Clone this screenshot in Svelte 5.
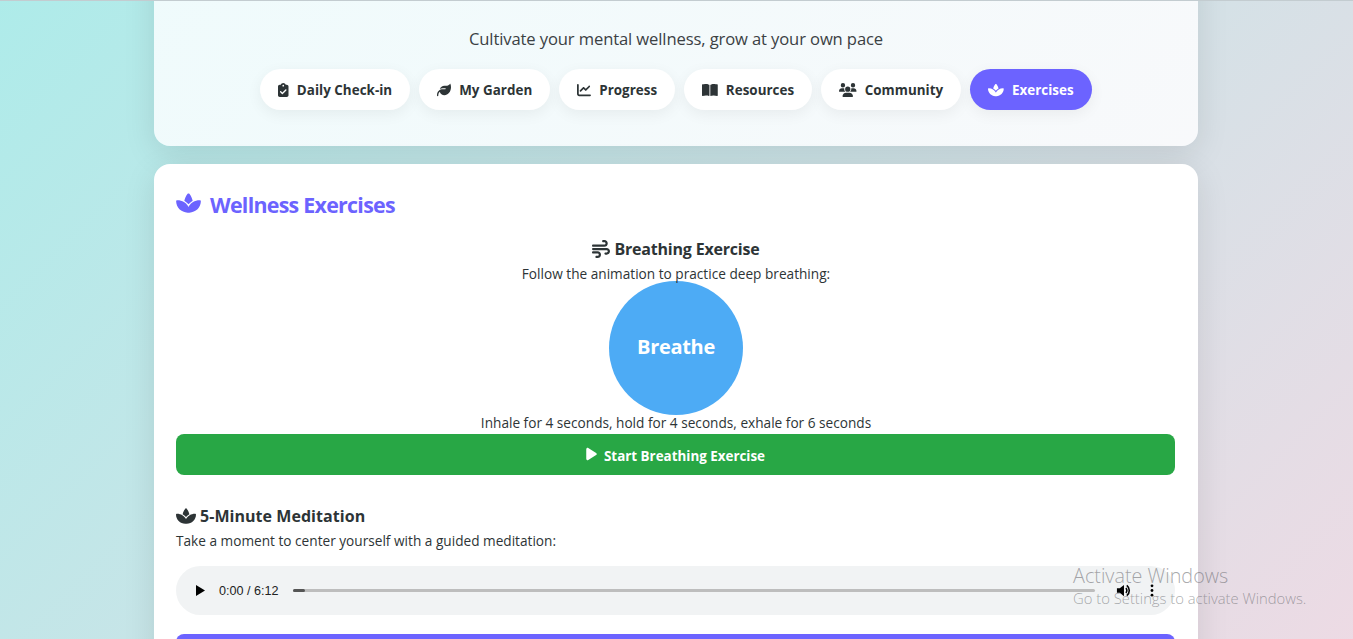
<script>
  const P = {
    check: ['0 0 384 512','M192 0c-41.8 0-77.4 26.7-90.5 64H64C28.7 64 0 92.7 0 128V448c0 35.3 28.7 64 64 64H320c35.3 0 64-28.7 64-64V128c0-35.3-28.7-64-64-64H282.5C269.4 26.7 233.8 0 192 0zm0 64a32 32 0 1 1 0 64 32 32 0 1 1 0-64zM305 273L177 401c-9.4 9.4-24.6 9.4-33.9 0L79 337c-9.4-9.4-9.4-24.6 0-33.9s24.6-9.4 33.9 0l47 47L271 239c9.4-9.4 24.6-9.4 33.9 0s9.4 24.6 0 33.9z'],
    leaf: ['0 0 512 512','M272 96c-78.6 0-145.1 51.5-167.7 122.5c33.6-17 71.5-26.5 111.7-26.5h88c8.8 0 16 7.2 16 16s-7.2 16-16 16H288 216s0 0 0 0c-16.6 0-32.7 1.9-48.2 5.4c-25.9 5.9-50 16.4-71.4 30.7c0 0 0 0 0 0C38.3 298.8 0 364.9 0 440v16c0 13.3 10.7 24 24 24s24-10.7 24-24V440c0-48.7 20.7-92.5 53.8-123.2C121.6 392.3 190.3 448 272 448l1 0c132.1-.7 239-130.9 239-291.4c0-42.6-7.5-83.1-21.1-119.6c-2.6-6.9-12.7-6.6-16.2 0C455.5 66.7 413.5 96 368 96h-96z'],
    chart: ['0 0 512 512','M64 64c0-17.7-14.3-32-32-32S0 46.3 0 64V400c0 44.2 35.8 80 80 80H480c17.7 0 32-14.3 32-32s-14.3-32-32-32H80c-8.8 0-16-7.2-16-16V64zm406.6 86.6c12.5-12.5 12.5-32.8 0-45.3s-32.8-12.5-45.3 0L320 210.7l-57.4-57.4c-12.5-12.5-32.8-12.5-45.3 0l-112 112c-12.5 12.5-12.5 32.8 0 45.3s32.8 12.5 45.3 0L240 221.3l57.4 57.4c12.5 12.5 32.8 12.5 45.3 0l128-128z'],
    book: ['0 0 576 512','M249.6 471.5c10.8 3.8 22.4-4.1 22.4-15.5V78.6c0-4.2-1.6-8.4-5-11C247.4 52 202.4 32 144 32C93.5 32 46.3 41.3 18.1 49.4C7.3 52.5 0 62.7 0 73.9V454.1c0 11.5 10.6 20 21.9 17.7C57 464.5 106.6 456 144 456c43.1 0 85.2 10.7 105.6 15.5zm76.8 0C346.8 466.7 388.9 456 432 456c37.4 0 87 8.5 122.1 15.8c11.3 2.3 21.9-6.2 21.9-17.7V73.9c0-11.3-7.3-21.4-18.1-24.5C529.7 41.3 482.5 32 432 32c-58.4 0-103.4 20-123 35.6c-3.4 2.6-5 6.8-5 11V456c0 11.4 11.7 19.3 22.4 15.5z'],
    users: ['0 0 640 512','M144 0a80 80 0 1 1 0 160A80 80 0 1 1 144 0zM512 0a80 80 0 1 1 0 160A80 80 0 1 1 512 0zM0 298.7C0 239.8 47.8 192 106.7 192h42.7c15.9 0 31 3.5 44.6 9.7c-1.3 7.2-1.9 14.7-1.9 22.3c0 38.2 16.8 72.5 43.3 96c-.2 0-.4 0-.7 0H21.3C9.6 320 0 310.4 0 298.7zM405.3 320c-.2 0-.4 0-.7 0c26.6-23.5 43.3-57.8 43.3-96c0-7.6-.7-15-1.9-22.3c13.6-6.3 28.7-9.7 44.6-9.7h42.7C592.2 192 640 239.8 640 298.7c0 11.8-9.6 21.3-21.3 21.3H405.3zM224 224a96 96 0 1 1 192 0 96 96 0 1 1 -192 0zM128 485.3C128 411.7 187.7 352 261.3 352H378.7C452.3 352 512 411.7 512 485.3c0 14.7-11.9 26.7-26.7 26.7H154.7c-14.7 0-26.7-11.9-26.7-26.7z'],
    spa: ['0 0 576 512','M183.1 235.3c33.7 20.7 62.9 48.1 85.8 80.5c7 9.9 13.4 20.3 19.1 31c5.7-10.8 12.1-21.1 19.1-31c22.9-32.4 52.1-59.8 85.8-80.5C437.6 207.8 490.1 192 546 192h9.9c11.1 0 20.1 9 20.1 20.1C576 360.1 456.1 480 308.1 480H288 267.9C119.9 480 0 360.1 0 212.1C0 201 9 192 20.1 192H30c55.9 0 108.4 15.8 153.1 43.3zM301.5 37.6c15.7 16.9 61.1 71.8 84.4 164.6c-38 21.6-71.4 50.8-97.9 85.6c-26.5-34.8-59.9-63.9-97.9-85.6c23.2-92.8 68.6-147.7 84.4-164.6C278 33.9 282.9 32 288 32s10 1.9 13.5 5.6z'],
    wind: ['0 0 512 512','M288 32c0 17.7 14.3 32 32 32h32c17.7 0 32 14.3 32 32s-14.3 32-32 32H32c-17.7 0-32 14.3-32 32s14.3 32 32 32H352c53 0 96-43 96-96s-43-96-96-96H320c-17.7 0-32 14.3-32 32zm64 352c0 17.7 14.3 32 32 32h32c53 0 96-43 96-96s-43-96-96-96H32c-17.7 0-32 14.3-32 32s14.3 32 32 32H416c17.7 0 32 14.3 32 32s-14.3 32-32 32H384c-17.7 0-32 14.3-32 32zM128 512h32c53 0 96-43 96-96s-43-96-96-96H32c-17.7 0-32 14.3-32 32s14.3 32 32 32H160c17.7 0 32 14.3 32 32s-14.3 32-32 32H128c-17.7 0-32 14.3-32 32s14.3 32 32 32z'],
    play: ['0 0 384 512','M73 39c-14.8-9.1-33.4-9.4-48.5-.9S0 62.6 0 80V432c0 17.4 9.4 33.4 24.5 41.9s33.7 8.1 48.5-.9L361 297c14.3-8.7 23-24.2 23-41s-8.7-32.2-23-41L73 39z']
  };
  const tabs = [
    { icon: 'check', label: 'Daily Check-in' },
    { icon: 'leaf', label: 'My Garden' },
    { icon: 'chart', label: 'Progress' },
    { icon: 'book', label: 'Resources' },
    { icon: 'users', label: 'Community' },
    { icon: 'spa', label: 'Exercises', active: true }
  ];
</script>

{#snippet ico(name, cls)}
  <svg class={cls} viewBox={P[name][0]} aria-hidden="true"><path fill="currentColor" d={P[name][1]} /></svg>
{/snippet}

<div class="viewport">
  <div class="page">
    <header class="hero">
      <h1>My Mental Garden</h1>
      <p class="tagline">Cultivate your mental wellness, grow at your own pace</p>
      <nav class="tabs">
        {#each tabs as t}
          <button class="tab" class:active={t.active}>
            {@render ico(t.icon, 'tab-ico')}
            <span>{t.label}</span>
          </button>
        {/each}
      </nav>
    </header>

    <main class="card">
      <h2>{@render ico('spa', 'h2-ico')}Wellness Exercises</h2>

      <section class="breathing">
        <h3>{@render ico('wind', 'wind')}Breathing Exercise</h3>
        <p>Follow the animation to practice deep breathing:</p>
        <div class="circle"><span>Breathe</span></div>
        <p>Inhale for 4 seconds, hold for 4 seconds, exhale for 6 seconds</p>
        <button class="wide green">{@render ico('play', 'play-ico')}<span>Start Breathing Exercise</span></button>
      </section>

      <section class="meditation">
        <h3>{@render ico('spa', 'h3-ico')}5-Minute Meditation</h3>
        <p>Take a moment to center yourself with a guided meditation:</p>
        <div class="audio">
          <svg class="a-play" viewBox="0 0 10 12" aria-hidden="true"><path d="M0 0l10 6-10 6z" fill="currentColor" /></svg>
          <span class="a-time">0:00 / 6:12</span>
          <div class="a-track"><div class="a-fill"></div></div>
          <svg class="a-vol" viewBox="0 0 16 16" aria-hidden="true">
            <path d="M1 5.5h3L8.5 2v12L4 10.5H1z" fill="currentColor" />
            <path d="M10.5 5.5a3.4 3.4 0 0 1 0 5M11.5 2.5a7 7 0 0 1 0 11" fill="none" stroke="currentColor" stroke-width="1.7" />
          </svg>
          <svg class="a-more" viewBox="0 0 4 14" aria-hidden="true"><circle cx="2" cy="2" r="1.5" fill="currentColor" /><circle cx="2" cy="7" r="1.5" fill="currentColor" /><circle cx="2" cy="12" r="1.5" fill="currentColor" /></svg>
        </div>
        <button class="wide purple">{@render ico('play', 'play-ico')}<span>Start Meditation</span></button>
      </section>
    </main>
  </div>

  <aside class="activate">
    <div class="a1">Activate Windows</div>
    <div class="a2">Go to Settings to activate Windows.</div>
  </aside>
</div>

<style>
  :global(body) {
    margin: 0;
    background: linear-gradient(135deg, #a8edea 0%, #fed6e3 100%) 0 -190px / 1353px 1376px no-repeat;
    background-color: #e8d9e4;
    font-family: "Open Sans", "Noto Sans", sans-serif;
    color: #2d3436;
  }
  .viewport {
    position: relative;
    height: 100vh;
    overflow: hidden;
    border-top: 1px solid #c3ccd0;
    box-sizing: border-box;
  }
  .page {
    width: 1044px;
    margin: -55px 0 0 154px;
  }
  .hero {
    box-sizing: border-box;
    height: 200px;
    padding-top: 6px;
    border-radius: 16px;
    background: linear-gradient(135deg, #effbfc 0%, #f8f9fb 100%);
    box-shadow: 0 8px 32px rgba(0, 0, 0, 0.1);
    text-align: center;
  }
  h1 {
    margin: 0;
    height: 48px;
    font-size: 33px;
    line-height: 48px;
    font-weight: 700;
    color: #6c63ff;
  }
  .tagline {
    margin: 27px 0 0;
    font-size: 16.6px;
    line-height: 24px;
    letter-spacing: -0.12px;
    color: #3b4144;
  }
  .tabs {
    display: flex;
    justify-content: center;
    gap: 9px;
    margin-top: 18px;
  }
  .tab {
    display: flex;
    align-items: center;
    height: 41px;
    padding: 0 18px;
    border: 0;
    border-radius: 25px;
    background: #fff;
    color: #2d3436;
    font: 700 13.4px "Open Sans", sans-serif;
    letter-spacing: 0.03px;
    box-shadow: 0 4px 15px rgba(0, 0, 0, 0.06);
  }
  .tab.active {
    background: #6c63ff;
    color: #fff;
  }
  .tab-ico {
    height: 14px;
    width: auto;
    margin-right: 8px;
  }
  .card {
    box-sizing: border-box;
    height: 600px;
    margin-top: 18px;
    padding: 22px;
    border-radius: 16px;
    background: #fff;
    box-shadow: 0 8px 32px rgba(0, 0, 0, 0.1);
  }
  h2 {
    display: flex;
    align-items: center;
    margin: 0;
    height: 36px;
    font-size: 21.4px;
    font-weight: 700;
    letter-spacing: -0.73px;
    color: #6c63ff;
  }
  .h2-ico {
    width: 25px;
    height: 22px;
    margin-right: 9px;
    margin-top: -2px;
  }
  h3 {
    margin: 0;
    font-size: 16px;
    line-height: 24px;
    font-weight: 700;
    letter-spacing: -0.2px;
  }
  .breathing {
    margin-top: 15px;
    text-align: center;
  }
  .breathing h3 {
    display: flex;
    justify-content: center;
    align-items: center;
  }
  .wind {
    width: 18px;
    height: 18px;
    margin-right: 4px;
  }
  p {
    margin: 0;
    font-size: 13.65px;
    line-height: 20px;
  }
  .breathing h3 + p {
    margin-top: 3px;
  }
  .circle {
    display: flex;
    align-items: center;
    justify-content: center;
    width: 134px;
    height: 134px;
    margin: -3px auto 0;
    border-radius: 50%;
    background: #4dabf5;
    color: #fff;
    font-size: 20px;
    font-weight: 700;
    letter-spacing: -0.3px;
  }
  .circle span {
    margin-top: -3px;
  }
  .circle + p {
    margin-top: -2px;
  }
  .wide {
    display: flex;
    align-items: center;
    justify-content: center;
    width: 999px;
    height: 41px;
    border: 0;
    border-radius: 8px;
    color: #fff;
    font: 700 13.4px "Open Sans", sans-serif;
  }
  .wide span {
    margin-top: 3px;
  }
  .green {
    margin-top: 1px;
    background: #28a745;
  }
  .purple {
    margin-top: 19px;
    background: #6c63ff;
  }
  .play-ico {
    width: 11px;
    height: 14px;
    margin: -2px 7px 0 0;
  }
  .meditation {
    margin-top: 29px;
  }
  .meditation h3 {
    display: flex;
    align-items: center;
    letter-spacing: 0.05px;
  }
  .h3-ico {
    width: 20px;
    height: 18px;
    margin-right: 4px;
  }
  .meditation p {
    margin-top: 3px;
  }
  .audio {
    display: flex;
    align-items: center;
    width: 999px;
    height: 49px;
    margin-top: 15px;
    border-radius: 25px;
    background: #f1f3f4;
    color: #000;
  }
  .a-play {
    width: 9px;
    height: 11px;
    margin-left: 20px;
  }
  .a-time {
    margin-left: 14px;
    font: 12.6px "Liberation Sans", Arial, sans-serif;
    color: #222;
  }
  .a-track {
    width: 802px;
    height: 3px;
    margin-left: 14px;
    border-radius: 2px;
    background: #bdbdbd;
  }
  .a-fill {
    width: 12px;
    height: 3px;
    border-radius: 2px;
    background: #555;
  }
  .a-vol {
    width: 15px;
    height: 15px;
    margin-left: 21px;
  }
  .a-more {
    width: 4px;
    height: 13px;
    margin-left: 19px;
  }
  .activate {
    position: absolute;
    left: 1073px;
    top: 564px;
    font-family: "Open Sans", sans-serif;
    font-weight: 300;
    color: rgba(110, 110, 115, 0.6);
    white-space: nowrap;
    pointer-events: none;
  }
  .a1 {
    font-size: 19.8px;
    line-height: 22px;
    letter-spacing: 0;
  }
  .a2 {
    font-size: 14.8px;
    line-height: 22px;
    letter-spacing: 0;
  }
</style>
